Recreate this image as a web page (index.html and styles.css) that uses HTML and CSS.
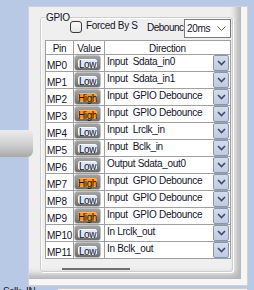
FILE: index.html
```html
<!DOCTYPE html>
<html lang="en">
<head>
    <meta charset="UTF-8">
    <meta name="viewport" content="width=device-width, initial-scale=1.0">
    <link rel="stylesheet" href="styles.css">
    <title>GPIO</title>
</head>
<body>
    <!-- tab peeking out from behind the panel -->
    <div class="side-tab"></div>

    <div class="panel">
        <div class="panel-body">
            <div class="group">
                <div class="group-head">
                    <span class="legend">GPIO</span>
                    <span class="check"></span>
                    <span class="check-label">Forced By S</span>
                    <span class="deb-label">Debounc</span>
                    <div class="select">
                        <span>20ms</span>
                        <svg width="9" height="5" viewBox="0 0 9 5"><polyline points="0.5,0.5 4.5,4.5 8.5,0.5" fill="none" stroke="#606060" stroke-width="1"/></svg>
                    </div>
                </div>

                <div class="grid">
                    <div class="hd">Pin</div>
                    <div class="hd">Value</div>
                    <div class="hd">Direction</div>

                    <div class="pin">MP0</div>
                    <div class="val"><span class="btn"><span class="pill low">Low</span></span></div>
                    <div class="dir"><span class="dir-text">Input&nbsp; Sdata_in0</span><span class="drop"><svg width="9" height="6" viewBox="0 0 9 6"><polyline points="1,1 4.5,4.5 8,1" fill="none" stroke="#3d4b68" stroke-width="1.6"/></svg></span></div>

                    <div class="pin">MP1</div>
                    <div class="val"><span class="btn"><span class="pill low">Low</span></span></div>
                    <div class="dir"><span class="dir-text">Input&nbsp; Sdata_in1</span><span class="drop"><svg width="9" height="6" viewBox="0 0 9 6"><polyline points="1,1 4.5,4.5 8,1" fill="none" stroke="#3d4b68" stroke-width="1.6"/></svg></span></div>

                    <div class="pin">MP2</div>
                    <div class="val"><span class="btn"><span class="pill high">High</span></span></div>
                    <div class="dir"><span class="dir-text">Input&nbsp; GPIO Debounce</span><span class="drop"><svg width="9" height="6" viewBox="0 0 9 6"><polyline points="1,1 4.5,4.5 8,1" fill="none" stroke="#3d4b68" stroke-width="1.6"/></svg></span></div>

                    <div class="pin">MP3</div>
                    <div class="val"><span class="btn"><span class="pill high">High</span></span></div>
                    <div class="dir"><span class="dir-text">Input&nbsp; GPIO Debounce</span><span class="drop"><svg width="9" height="6" viewBox="0 0 9 6"><polyline points="1,1 4.5,4.5 8,1" fill="none" stroke="#3d4b68" stroke-width="1.6"/></svg></span></div>

                    <div class="pin">MP4</div>
                    <div class="val"><span class="btn"><span class="pill low">Low</span></span></div>
                    <div class="dir"><span class="dir-text">Input&nbsp; Lrclk_in</span><span class="drop"><svg width="9" height="6" viewBox="0 0 9 6"><polyline points="1,1 4.5,4.5 8,1" fill="none" stroke="#3d4b68" stroke-width="1.6"/></svg></span></div>

                    <div class="pin">MP5</div>
                    <div class="val"><span class="btn"><span class="pill low">Low</span></span></div>
                    <div class="dir"><span class="dir-text">Input&nbsp; Bclk_in</span><span class="drop"><svg width="9" height="6" viewBox="0 0 9 6"><polyline points="1,1 4.5,4.5 8,1" fill="none" stroke="#3d4b68" stroke-width="1.6"/></svg></span></div>

                    <div class="pin">MP6</div>
                    <div class="val"><span class="btn"><span class="pill low">Low</span></span></div>
                    <div class="dir"><span class="dir-text">Output Sdata_out0</span><span class="drop"><svg width="9" height="6" viewBox="0 0 9 6"><polyline points="1,1 4.5,4.5 8,1" fill="none" stroke="#3d4b68" stroke-width="1.6"/></svg></span></div>

                    <div class="pin">MP7</div>
                    <div class="val"><span class="btn"><span class="pill high">High</span></span></div>
                    <div class="dir"><span class="dir-text">Input&nbsp; GPIO Debounce</span><span class="drop"><svg width="9" height="6" viewBox="0 0 9 6"><polyline points="1,1 4.5,4.5 8,1" fill="none" stroke="#3d4b68" stroke-width="1.6"/></svg></span></div>

                    <div class="pin">MP8</div>
                    <div class="val"><span class="btn"><span class="pill low">Low</span></span></div>
                    <div class="dir"><span class="dir-text">Input&nbsp; GPIO Debounce</span><span class="drop"><svg width="9" height="6" viewBox="0 0 9 6"><polyline points="1,1 4.5,4.5 8,1" fill="none" stroke="#3d4b68" stroke-width="1.6"/></svg></span></div>

                    <div class="pin">MP9</div>
                    <div class="val"><span class="btn"><span class="pill high">High</span></span></div>
                    <div class="dir"><span class="dir-text">Input&nbsp; GPIO Debounce</span><span class="drop"><svg width="9" height="6" viewBox="0 0 9 6"><polyline points="1,1 4.5,4.5 8,1" fill="none" stroke="#3d4b68" stroke-width="1.6"/></svg></span></div>

                    <div class="pin">MP10</div>
                    <div class="val"><span class="btn"><span class="pill low">Low</span></span></div>
                    <div class="dir"><span class="dir-text">In Lrclk_out</span><span class="drop"><svg width="9" height="6" viewBox="0 0 9 6"><polyline points="1,1 4.5,4.5 8,1" fill="none" stroke="#3d4b68" stroke-width="1.6"/></svg></span></div>

                    <div class="pin">MP11</div>
                    <div class="val"><span class="btn"><span class="pill low">Low</span></span></div>
                    <div class="dir"><span class="dir-text">In Bclk_out</span><span class="drop"><svg width="9" height="6" viewBox="0 0 9 6"><polyline points="1,1 4.5,4.5 8,1" fill="none" stroke="#3d4b68" stroke-width="1.6"/></svg></span></div>
                </div>

                <div class="hbar"></div>
            </div>
        </div>
    </div>

    <div class="bottom-row">
        <span class="bottom-label">Sclk_IN</span>
        <div class="bottom-box"></div>
    </div>
</body>
</html>
```

FILE: styles.css
```css
body {
    margin: 0;
    background-color: #b7c9e5;
    font-family: "Liberation Sans", Arial, sans-serif;
    font-size: 10px;
    letter-spacing: -0.3px;
    color: #141428;
    overflow: hidden;
}

.side-tab {
    position: absolute;
    left: 0;
    top: 130px;
    width: 33px;
    height: 27px;
    border-radius: 0 6px 6px 0;
    background: linear-gradient(#ececec, #cfcfcf 55%, #a9a9a9);
    z-index: 2;
}

/* window panel with the wide bevel on the right and bottom */
.panel {
    margin: 6px 0 0 28px;
    width: 220px;
    height: 280px;
    box-sizing: border-box;
    border: 1px solid #d2d2d2;
    background: #f6f6f6;
    padding: 0 6px 6px 0;
}

.panel-body {
    height: 100%;
    background: #efefef;
    box-shadow: inset -8px -8px 6px -3px rgba(0, 0, 0, 0.24);
    padding: 10px 0 0 11px;
    box-sizing: border-box;
}

.group {
    width: 193px;
    height: 255px;
    box-sizing: border-box;
    border: 1px solid #cdcdcd;
    border-radius: 3px;
    box-shadow: inset 1px 1px 0 #fff, 1px 1px 0 #fff;
}

.group-head {
    display: flex;
    align-items: flex-start;
    height: 22px;
}

.legend {
    margin: -6px 0 0 4px;
    width: 24px;
    padding-left: 1px;
    line-height: 12px;
    background: #efefef;
    box-sizing: border-box;
}

.check {
    margin: 3px 0 0 1px;
    width: 12px;
    height: 12px;
    box-sizing: border-box;
    border: 1px solid #3a3a3a;
    border-radius: 3px;
    background: linear-gradient(#f8f8f8, #e6e6e6);
}

.check-label {
    margin: 2px 0 0 4px;
    width: 61px;
    line-height: 12px;
    white-space: nowrap;
    overflow: hidden;
}

.deb-label {
    margin-top: 4px;
    width: 37px;
    line-height: 12px;
    letter-spacing: -0.5px;
    white-space: nowrap;
}

.select {
    margin-top: 1px;
    width: 47px;
    height: 19px;
    box-sizing: border-box;
    border: 1px solid #7a7a7a;
    background: #fff;
    display: flex;
    align-items: center;
    justify-content: space-between;
    padding: 0 4px 0 2px;
}

.select svg {
    display: block;
}

.grid {
    margin: 0 0 0 4px;
    display: grid;
    grid-template-columns: 28px 31px 126px;
    grid-template-rows: 14px;
    grid-auto-rows: 17px;
    border-top: 1px solid #a0a0a0;
    border-left: 1px solid #a0a0a0;
    width: 186px;
    box-sizing: border-box;
}

.grid > div {
    background: #fff;
    border-right: 1px solid #a0a0a0;
    border-bottom: 1px solid #a0a0a0;
    box-sizing: border-box;
    white-space: nowrap;
}

.hd {
    text-align: center;
    line-height: 12px;
    padding-top: 2px;
}

.pin {
    padding: 5px 0 0 1px;
    line-height: 12px;
}

.btn {
    display: block;
    width: 27px;
    height: 16px;
    box-sizing: border-box;
    border: 1px solid #c2c2c2;
    border-radius: 3px;
    background: linear-gradient(#a4a4a4, #6c6c6c);
    padding: 3px;
}

.pill {
    display: block;
    height: 9px;
    border-radius: 3px;
    text-align: center;
    line-height: 11px;
    font-size: 10px;
    letter-spacing: -0.4px;
}

.low {
    background: #dfe8f6;
    box-shadow: inset 0 0 0 1px #f6f9fd;
}

.high {
    background: #f69432;
    box-shadow: inset 0 0 0 1px #ffb262;
    color: #2a1600;
}

.dir {
    display: flex;
    justify-content: space-between;
    padding-left: 2px;
}

.dir-text {
    line-height: 12px;
    padding-top: 1px;
}

.drop {
    margin-right: 1px;
    width: 16px;
    height: 16px;
    box-sizing: border-box;
    border: 1px solid #8796b2;
    border-radius: 2px;
    background: linear-gradient(#d3dcec, #bfcbe0);
    display: flex;
    align-items: center;
    justify-content: center;
}

.drop svg {
    display: block;
}

.hbar {
    margin: 9px 0 0 21px;
    width: 68px;
    height: 2px;
    background: #707070;
}

.bottom-row {
    display: flex;
    align-items: flex-start;
}

.bottom-label {
    margin-left: 3px;
    width: 55px;
    line-height: 12px;
}

.bottom-box {
    margin-top: 2px;
    width: 189px;
    height: 10px;
    background: #f3f3f3;
    border-top: 1px solid #cfcfcf;
}
```
